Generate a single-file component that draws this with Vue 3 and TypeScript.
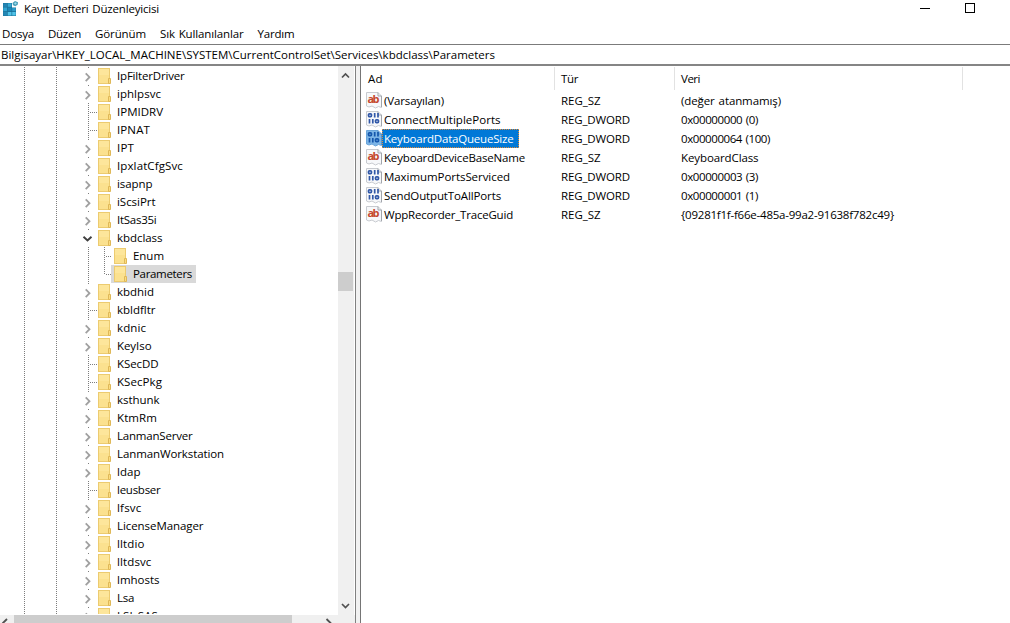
<script setup lang="ts">
interface TreeNode {
  name: string
  w: number
  state: 'closed' | 'open' | 'leaf'
  child?: boolean
  last?: boolean
  selected?: boolean
}
interface RegValue {
  name: string
  nw: number
  type: 'REG_SZ' | 'REG_DWORD'
  data: string
  dw: number
  selected?: boolean
}

// Spreads a label over a given width by adjusting its tracking.
const vFit = {
  mounted(el: HTMLElement, binding: { value: number }) {
    const n = (el.textContent ?? '').length
    const natural = el.getBoundingClientRect().width
    el.style.letterSpacing = `${(binding.value - natural) / n}px`
  },
}

const menu = [
  { label: 'Dosya', w: 32 },
  { label: 'Düzen', w: 33 },
  { label: 'Görünüm', w: 51 },
  { label: 'Sık Kullanılanlar', w: 83.5 },
  { label: 'Yardım', w: 37 },
]

const tree: TreeNode[] = [
  { name: 'IpFilterDriver', w: 67.5, state: 'closed' },
  { name: 'iphlpsvc', w: 44, state: 'closed' },
  { name: 'IPMIDRV', w: 46, state: 'leaf' },
  { name: 'IPNAT', w: 33, state: 'leaf' },
  { name: 'IPT', w: 17, state: 'closed' },
  { name: 'IpxlatCfgSvc', w: 66, state: 'closed' },
  { name: 'isapnp', w: 35.5, state: 'closed' },
  { name: 'iScsiPrt', w: 38.5, state: 'closed' },
  { name: 'ItSas35i', w: 39.5, state: 'closed' },
  { name: 'kbdclass', w: 45.5, state: 'open' },
  { name: 'Enum', w: 31, state: 'leaf', child: true },
  { name: 'Parameters', w: 59, state: 'leaf', child: true, last: true, selected: true },
  { name: 'kbdhid', w: 37, state: 'closed' },
  { name: 'kbldfltr', w: 38.5, state: 'leaf' },
  { name: 'kdnic', w: 29, state: 'closed' },
  { name: 'KeyIso', w: 34.5, state: 'closed' },
  { name: 'KSecDD', w: 41.5, state: 'leaf' },
  { name: 'KSecPkg', w: 45, state: 'leaf' },
  { name: 'ksthunk', w: 42.5, state: 'closed' },
  { name: 'KtmRm', w: 40, state: 'closed' },
  { name: 'LanmanServer', w: 75.5, state: 'closed' },
  { name: 'LanmanWorkstation', w: 107, state: 'closed' },
  { name: 'ldap', w: 23.5, state: 'closed' },
  { name: 'leusbser', w: 43.5, state: 'leaf' },
  { name: 'lfsvc', w: 24.5, state: 'closed' },
  { name: 'LicenseManager', w: 86.5, state: 'closed' },
  { name: 'lltdio', w: 27.5, state: 'closed' },
  { name: 'lltdsvc', w: 34.5, state: 'closed' },
  { name: 'lmhosts', w: 42.5, state: 'closed' },
  { name: 'Lsa', w: 17, state: 'closed' },
  { name: 'LSI_SAS', w: 41, state: 'closed' },
]

const values: RegValue[] = [
  { name: '(Varsayılan)', nw: 60, type: 'REG_SZ', data: '(değer atanmamış)', dw: 100 },
  { name: 'ConnectMultiplePorts', nw: 116.5, type: 'REG_DWORD', data: '0x00000000 (0)', dw: 77 },
  { name: 'KeyboardDataQueueSize', nw: 129.5, type: 'REG_DWORD', data: '0x00000064 (100)', dw: 89, selected: true },
  { name: 'KeyboardDeviceBaseName', nw: 141, type: 'REG_SZ', data: 'KeyboardClass', dw: 77.5 },
  { name: 'MaximumPortsServiced', nw: 126, type: 'REG_DWORD', data: '0x00000003 (3)', dw: 77 },
  { name: 'SendOutputToAllPorts', nw: 117, type: 'REG_DWORD', data: '0x00000001 (1)', dw: 77 },
  { name: 'WppRecorder_TraceGuid', nw: 129, type: 'REG_SZ', data: '{09281f1f-f66e-485a-99a2-91638f782c49}', dw: 213 },
]
</script>

<template>
  <div class="window">
    <header class="titlebar">
      <svg class="app-icon" width="17" height="17" viewBox="0 0 17 17">
        <path d="M1 3H10V7.500H14V16H1Z" fill="#1a7299" />
        <path d="M1.300 3.300h3.700v3.500H1.300z" fill="#2584b3" />
        <path d="M5.700 3.300h3.800v3.500H5.700z" fill="#39a9d4" />
        <path d="M1.300 7.500h3.700v3.700H1.300z" fill="#32a5d2" />
        <path d="M5.700 7.500h3.800v3.700H5.700z" fill="#1f87b8" />
        <path d="M10.200 8h3.500v3.200h-3.500z" fill="#2c9bc9" />
        <path d="M1.300 12h3.700v3.600H1.300z" fill="#2387b5" />
        <path d="M5.700 12h3.800v3.600H5.700zM10.200 12h3.500v3.600h-3.500z" fill="#50c3e8" />
        <path d="M10.500 3L13 1L16 2.200L15.700 4.700L13.300 6.300L11 5.200Z" fill="#4b9fba" />
        <path d="M12 3.300L13.500 2.300L14.800 3.300L13.400 4.700Z" fill="#9bdcea" />
      </svg>
      <span v-fit="135" class="t title">Kayıt Defteri Düzenleyicisi</span>
      <svg class="caption" width="90" height="18" viewBox="0 0 90 18">
        <path d="M0 8.500H10" stroke="#000" />
        <rect x="45.500" y="3.500" width="9" height="9" fill="none" stroke="#000" />
      </svg>
    </header>
    <nav class="menubar">
      <span v-for="m in menu" :key="m.label" v-fit="m.w" class="t">{{ m.label }}</span>
    </nav>
    <div class="address">
      <span v-fit="494" class="t">Bilgisayar\HKEY_LOCAL_MACHINE\SYSTEM\CurrentControlSet\Services\kbdclass\Parameters</span>
    </div>
    <main class="panes">
      <section class="left">
        <div class="tree-area">
          <div class="tree">
            <div v-for="n in tree" :key="n.name" class="node" :class="{ child: n.child }">
              <svg class="lines" width="116" height="18" viewBox="0 0 116 18">
                <g stroke="#7d7d7d" stroke-dasharray="1 1" fill="none">
                  <path d="M24.500 0V18M56.500 0V18M88.500 0V18" />
                  <path v-if="n.state === 'leaf' && !n.child" d="M90 9.500H97" />
                  <path v-if="n.child" :d="n.last ? 'M104.5 0V10' : 'M104.5 0V18'" />
                  <path v-if="n.child" d="M106 9.500H111" />
                </g>
                <g v-if="n.state !== 'leaf'">
                  <rect x="83" y="2" width="11" height="15" fill="#fff" />
                  <path v-if="n.state === 'closed'" d="M85.700 6.300L89.500 10.200L85.700 14.100" fill="none" stroke="#a0a0a0" stroke-width="1.800" />
                  <path v-else d="M83.500 7.700L87.500 11.500L91.500 7.700" fill="none" stroke="#404040" stroke-width="1.900" />
                </g>
              </svg>
              <span class="item" :class="{ selected: n.selected }">
                <svg class="folder" width="14" height="18" viewBox="0 0 14 18">
                  <rect x="0.500" y="1.500" width="11" height="15" fill="#fbe18f" stroke="#eccb70" />
                  <path d="M1 2h10v6H1z" fill="#fde69b" />
                  <path d="M10.500 11.500h2v5h-2z" fill="#fbdc80" stroke="#dfb858" />
                </svg>
                <span v-fit="n.w" class="t">{{ n.name }}</span>
              </span>
            </div>
          </div>
          <div class="vscroll">
            <svg width="15" height="18" viewBox="0 0 15 18">
              <path d="M4 11.500L7.500 8L11 11.500" fill="none" stroke="#505050" stroke-width="1.700" />
            </svg>
            <div class="vthumb"></div>
            <svg class="down" width="15" height="18" viewBox="0 0 15 18">
              <path d="M4 7L7.500 10.500L11 7" fill="none" stroke="#505050" stroke-width="1.700" />
            </svg>
          </div>
        </div>
        <div class="hscroll">
          <svg width="14" height="8" viewBox="0 0 14 8">
            <path d="M7 4L2.500 8.500" fill="none" stroke="#505050" stroke-width="1.800" />
          </svg>
          <div class="hthumb"></div>
          <svg class="right-arrow" width="14" height="8" viewBox="0 0 14 8">
            <path d="M4.500 4L9 8.500" fill="none" stroke="#505050" stroke-width="1.800" />
          </svg>
        </div>
      </section>
      <div class="splitter"></div>
      <section class="right">
        <div class="grid head">
          <div class="cell name"><span v-fit="15" class="t">Ad</span></div>
          <div class="cell"><span v-fit="17" class="t">Tür</span></div>
          <div class="cell"><span v-fit="19" class="t">Veri</span></div>
        </div>
        <div v-for="v in values" :key="v.name" class="grid row">
          <div class="cell name">
            <svg class="value-icon" width="16" height="19" viewBox="0 0 16 19">
              <path d="M0.500 1.500H12L15.500 5V16.500L12.500 15.500L9.500 17L6 15L3 16L0.500 15Z" :fill="v.selected ? '#7db5e6' : '#f7f8fa'" :stroke="v.selected ? '#6aa5da' : '#c8cbd0'" />
              <path d="M12 1.500V5H15.500M15.500 5V16" fill="none" :stroke="v.selected ? '#5c92c3' : '#a1a5ab'" />
              <text v-if="v.type === 'REG_SZ'" x="1.500" y="11.500" class="ab" textLength="12">ab</text>
              <g v-else fill="none" :stroke="v.selected ? '#1557ac' : '#3158a8'" stroke-width="1.700">
                <rect x="2.500" y="3.800" width="3" height="2.800" rx="1" />
                <path d="M8.700 3V7.400M12 3V7.400M3.500 9V13.400M6.800 9V13.400" />
                <rect x="9.500" y="9.800" width="3" height="2.800" rx="1" />
              </g>
            </svg>
            <span class="label" :class="{ selected: v.selected }"><span v-fit="v.nw" class="t">{{ v.name }}</span></span>
          </div>
          <div class="cell"><span v-fit="v.type === 'REG_SZ' ? 39.500 : 69" class="t">{{ v.type }}</span></div>
          <div class="cell"><span v-fit="v.dw" class="t">{{ v.data }}</span></div>
        </div>
      </section>
    </main>
  </div>
</template>

<style>
body {
  margin: 0;
  overflow: hidden;
}
</style>

<style scoped>
.window {
  width: 1010px;
  height: 623px;
  display: flex;
  flex-direction: column;
  overflow: hidden;
  background: #fff;
  color: #000;
  font-family: "Open Sans", "Noto Sans", sans-serif;
  font-size: 11.5px;
  line-height: 18px;
}
svg {
  display: block;
  flex: none;
}
.t {
  display: inline-block;
  white-space: pre;
  word-spacing: 1px;
}
.titlebar {
  height: 24px;
  display: flex;
  align-items: flex-start;
  padding-left: 2px;
}
.title {
  margin-left: 5px;
}
.caption {
  margin-left: auto;
}
.menubar {
  height: 20px;
  box-sizing: border-box;
  padding: 1px 0 0 2px;
  display: flex;
  gap: 14px;
}
.address {
  height: 22px;
  box-sizing: border-box;
  border-top: 1px solid #7b7b7b;
  border-bottom: 2px solid #858585;
  padding-left: 1px;
  line-height: 20px;
}
.panes {
  flex: 1;
  min-height: 0;
  display: flex;
}
.left {
  width: 355px;
  display: flex;
  flex-direction: column;
}
.tree-area {
  height: 549px;
  display: flex;
}
.tree {
  width: 338px;
  height: 548px;
  box-sizing: border-box;
  padding-top: 1px;
  overflow: hidden;
}
.node {
  height: 18px;
  display: flex;
}
.lines {
  margin-right: -18px;
}
.node.child .lines {
  margin-right: -5px;
}
.item {
  display: flex;
  padding-right: 4px;
}
.child .item {
  padding-left: 3px;
}
.item.selected {
  background: #d9d9d9;
}
.folder {
  margin-right: 5px;
}
.vscroll {
  width: 16px;
  display: flex;
  flex-direction: column;
  background: #f0f0f0;
}
.vthumb {
  width: 15px;
  height: 19px;
  margin-top: 188px;
  background: #cdcdcd;
}
.down {
  margin-top: auto;
}
.hscroll {
  height: 8px;
  display: flex;
  background: #f0f0f0;
}
.hthumb {
  width: 278px;
  background: #cdcdcd;
}
.right-arrow {
  margin-left: 30px;
}
.splitter {
  width: 6px;
  box-sizing: border-box;
  background: #f1f1f1;
  border-left: 1px solid #808080;
  border-right: 1px solid #757575;
}
.right {
  flex: 1;
}
.grid {
  display: grid;
  grid-template-columns: 194px 120px 288px;
}
.head {
  height: 25px;
  box-sizing: border-box;
  padding-top: 1px;
}
.head .cell {
  height: 23px;
  line-height: 24px;
  border-right: 1px solid #e2e2e2;
}
.row {
  height: 19px;
  line-height: 19px;
}
.cell {
  padding-left: 6px;
}
.cell.name {
  padding-left: 7px;
}
.row .cell.name {
  display: flex;
  padding-left: 5px;
}
.label {
  box-sizing: border-box;
  height: 19px;
  padding: 0 4px 0 1px;
  border: 1px solid transparent;
  line-height: 17px;
}
.label.selected {
  background: #0078d7;
  border: 1px dotted #e08a38;
  color: #fff;
}
.ab {
  font: bold 11px "Open Sans", sans-serif;
  fill: #c5482f;
}
</style>
